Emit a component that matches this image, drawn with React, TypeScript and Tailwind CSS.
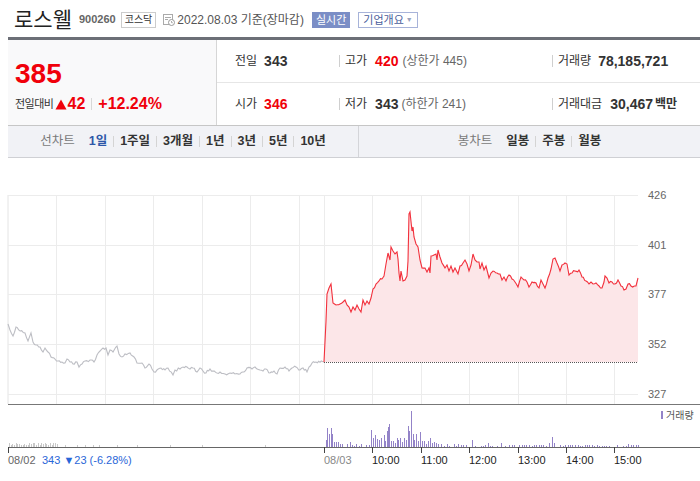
import React from "react";

function rng(seed: number) {
  let a = seed;
  return () => {
    a = (a + 0x6d2b79f5) | 0;
    let t = Math.imul(a ^ (a >>> 15), 1 | a);
    t = (t + Math.imul(t ^ (t >>> 7), 61 | t)) ^ t;
    return ((t ^ (t >>> 14)) >>> 0) / 4294967296;
  };
}

// fill in between key points with a bit of noise so the line looks like tick data
function densify(pts: number[][], jitter: number, seed: number) {
  const r = rng(seed);
  const out: number[][] = [];
  for (let i = 0; i < pts.length - 1; i++) {
    const [x0, y0] = pts[i];
    const [x1, y1] = pts[i + 1];
    out.push([x0, y0]);
    const n = Math.floor((x1 - x0) / 1.3);
    for (let k = 1; k < n; k++) {
      const t = k / n;
      out.push([x0 + (x1 - x0) * t, y0 + (y1 - y0) * t + (r() - 0.5) * jitter]);
    }
  }
  out.push(pts[pts.length - 1]);
  return out;
}

const toPath = (pts: number[][]) => pts.map((p, i) => `${i ? "L" : "M"}${p[0].toFixed(1)},${p[1].toFixed(1)}`).join(" ");

const TODAY_KEYS = [
  [324, 361], [326, 320], [327, 293], [329, 287], [331, 283], [333, 302], [336, 304], [340, 303], [343, 301], [345, 299],
  [347, 304], [349, 306], [351, 311], [353, 306], [355, 309], [357, 304], [359, 308], [361, 311], [363, 299], [365, 304],
  [367, 300], [369, 303], [371, 297], [373, 288], [376, 283], [379, 280], [382, 278], [384, 275], [386, 263], [388, 252],
  [390, 259], [391, 246], [393, 250], [395, 253], [397, 251], [398, 258], [399, 272], [400, 280], [401, 270], [403, 280],
  [405, 279], [407, 275], [408, 260], [409, 213], [410, 211], [412, 230], [413, 226], [414, 236], [416, 243], [418, 246],
  [420, 259], [422, 267], [425, 267], [427, 271], [429, 267], [430, 272], [431, 255], [434, 254], [436, 253], [437, 259],
  [438, 249], [440, 256], [442, 262], [445, 267], [447, 264], [449, 270], [451, 265], [453, 271], [455, 267], [458, 273],
  [460, 265], [463, 262], [465, 259], [467, 263], [469, 270], [471, 264], [473, 253], [475, 259], [477, 261], [479, 261],
  [480, 268], [482, 262], [484, 269], [486, 265], [488, 273], [489, 277], [491, 272], [493, 270], [497, 272], [500, 273],
  [502, 279], [504, 276], [506, 280], [509, 274], [512, 278], [515, 281], [518, 286], [521, 276], [524, 279], [527, 281],
  [529, 286], [532, 281], [536, 282], [539, 287], [541, 279], [543, 283], [545, 287], [548, 277], [551, 268], [553, 258],
  [555, 257], [557, 262], [560, 270], [562, 264], [565, 262], [567, 263], [569, 274], [572, 272], [575, 270], [579, 269],
  [582, 276], [586, 280], [589, 283], [591, 281], [593, 283], [596, 282], [599, 285], [602, 287], [604, 281], [605, 275],
  [607, 277], [609, 282], [612, 281], [615, 283], [618, 279], [621, 285], [624, 289], [626, 288], [628, 283], [631, 285],
  [636, 285], [638, 277],
];

const PREV_KEYS = [
  [8, 323], [10, 329], [13, 335], [16, 326], [20, 330], [25, 332], [28, 340], [31, 332], [33, 341], [36, 344], [40, 346],
  [43, 351], [45, 347], [48, 351], [51, 356], [55, 358], [58, 360], [62, 361], [65, 362], [67, 358], [70, 361], [73, 363],
  [77, 361], [79, 366], [82, 363], [85, 360], [90, 359], [94, 361], [97, 354], [100, 350], [103, 347], [106, 347],
  [108, 354], [110, 349], [113, 351], [117, 345], [119, 353], [122, 356], [125, 353], [130, 352], [134, 356], [137, 362],
  [142, 362], [145, 367], [149, 363], [152, 368], [154, 371], [157, 369], [161, 367], [165, 369], [168, 367], [173, 374],
  [175, 369], [180, 368], [183, 366], [187, 366], [190, 368], [193, 367], [197, 371], [200, 367], [203, 370], [206, 372],
  [210, 368], [213, 370], [217, 372], [220, 371], [225, 373], [230, 372], [235, 373], [240, 373], [244, 371], [247, 367],
  [252, 368], [255, 366], [260, 369], [263, 370], [266, 368], [270, 372], [274, 370], [277, 373], [280, 367], [285, 366],
  [289, 370], [292, 367], [296, 366], [300, 369], [303, 367], [307, 371], [309, 366], [312, 362], [316, 361], [324, 361],
];

const SPIKES: [number, number][] = [
  [326, 7], [327, 19], [329, 13], [331, 19], [332, 13], [334, 5], [336, 5], [338, 5], [340, 3], [342, 3], [350, 5],
  [371, 17], [373, 9], [375, 12], [377, 8], [379, 7], [381, 9], [384, 12], [385, 6], [387, 16], [388, 20], [389, 23],
  [391, 6], [393, 6], [395, 4], [397, 9], [398, 7], [400, 9], [402, 5], [404, 9], [406, 7], [408, 21], [409, 16],
  [411, 36], [413, 13], [414, 7], [416, 13], [418, 6], [420, 15], [422, 6], [424, 6], [426, 3], [428, 6], [430, 9],
  [432, 4], [434, 5], [436, 4], [438, 3], [441, 3], [447, 3], [472, 7], [488, 4], [501, 4], [549, 4], [552, 10],
  [554, 4], [628, 3], [638, 2],
];

function buildVolume() {
  const r = rng(7);
  const bars: [number, number][] = [...SPIKES];
  for (let x = 325; x < 638; x += 1.7) {
    const rx = Math.round(x);
    if (bars.some((b) => Math.abs(b[0] - rx) < 2)) continue;
    const v = r();
    if (v < 0.25) continue;
    const early = rx < 460 ? 2 : 0;
    bars.push([rx, 1 + Math.floor(r() * (2 + early))]);
  }
  return bars;
}

function buildPrevVolume() {
  const r = rng(3);
  const bars: [number, number][] = [];
  for (let x = 9; x < 57; x += 1.7) bars.push([Math.round(x), 2 + Math.floor(r() * 3)]);
  [65, 77, 85, 93, 99, 117, 137, 170, 202, 265].forEach((x) => bars.push([x, 2]));
  return bars;
}

const today = densify(TODAY_KEYS, 3, 11);
const prev = densify(PREV_KEYS, 2.5, 5);
const todayVol = buildVolume();
const prevVol = buildPrevVolume();

const V_GRID = [56, 105, 153, 202, 250, 299, 324, 372, 421, 469, 518, 566, 614];
const H_GRID: [number, string][] = [[194, "426"], [244, "401"], [293, "377"], [343, "352"], [393, "327"]];
const TIMES: [number, string][] = [[372, "10:00"], [421, "11:00"], [469, "12:00"], [518, "13:00"], [566, "14:00"], [614, "15:00"]];

function Chart() {
  const areaPath = `${toPath(today)} L638,361 L324,361 Z`;
  return (
    <svg width="700" height="324" viewBox="0 157 700 324" className="block">
      {/* grid */}
      <line x1="8" y1="194" x2="8" y2="403" stroke="#e4e4e4" />
      {V_GRID.map((x) => (
        <line key={x} x1={x + 0.5} y1="194" x2={x + 0.5} y2="403" stroke="#ececec" />
      ))}
      {H_GRID.map(([y]) => (
        <line key={y} x1="8" y1={y + 0.5} x2="638" y2={y + 0.5} stroke="#ececec" />
      ))}
      {H_GRID.map(([y, t]) => (
        <text key={t} x="648" y={y + 4} fontSize="11" fill="#666" fontFamily="Liberation Sans, sans-serif">
          {t}
        </text>
      ))}

      {/* price */}
      <path d={areaPath} fill="#fce6e8" />
      <line x1="324" y1="361.5" x2="638" y2="361.5" stroke="#555" strokeDasharray="1 1" />
      <path d={toPath(prev)} fill="none" stroke="#bdbec4" strokeWidth="1.1" />
      <path d={toPath(today)} fill="none" stroke="#f2303c" strokeWidth="1.1" />

      <line x1="8" y1="403.5" x2="700" y2="403.5" stroke="#777" />

      {/* volume */}
      {prevVol.map(([x, h], i) => (
        <rect key={"p" + i} x={x} y={446 - h} width="1" height={h} fill="#c9c9c9" />
      ))}
      {todayVol.map(([x, h], i) => (
        <rect key={"t" + i} x={x} y={446 - h} width="1" height={h} fill="#9383c8" />
      ))}
      <rect x="661" y="410" width="2" height="8" fill="#9383c8" />
      <text x="666" y="418" fontSize="10" fill="#555" fontFamily="Noto Sans CJK KR, sans-serif">
        거래량
      </text>

      {/* axis */}
      <line x1="8" y1="446.5" x2="700" y2="446.5" stroke="#666" />
      {[8, 324, ...TIMES.map((t) => t[0])].map((x) => (
        <line key={x} x1={x + 0.5} y1="446" x2={x + 0.5} y2="452" stroke="#444" />
      ))}
      <text y="463" fontSize="11" fontFamily="Liberation Sans, sans-serif">
        <tspan x="8" fill="#666">08/02</tspan>
        <tspan x="42" fill="#2a66d8">343 ▼23 (-6.28%)</tspan>
      </text>
      <text x="324" y="463" fontSize="11" fill="#888" fontFamily="Liberation Sans, sans-serif">
        08/03
      </text>
      {TIMES.map(([x, t]) => (
        <text key={t} x={x} y="463" fontSize="11" fill="#222" fontFamily="Liberation Sans, sans-serif">
          {t}
        </text>
      ))}
    </svg>
  );
}

function CalIcon() {
  return (
    <svg width="13" height="13" viewBox="0 0 13 13" className="ml-[6px]">
      <rect x="1.5" y="1.5" width="9" height="10" fill="none" stroke="#aaa" />
      <line x1="3" y1="4.5" x2="9" y2="4.5" stroke="#aaa" />
      <line x1="3" y1="6.5" x2="6" y2="6.5" stroke="#aaa" />
      <circle cx="9.5" cy="9.5" r="3" fill="#fff" stroke="#999" />
      <path d="M9.5 8v1.7h1.3" fill="none" stroke="#999" strokeWidth="0.8" />
    </svg>
  );
}

function Sep() {
  return <span className="w-px h-[11px] bg-[#d4d4d4] mx-[6px]" />;
}

function Toolbar() {
  const items = ["1주일", "3개월", "1년", "3년", "5년", "10년"];
  return (
    <div className="ml-[8px] h-[32px] flex bg-[#f1f2f6] border-b border-[#cfd0d4] text-[12.5px]">
      <div className="w-[351px] border-r border-[#d4d5d9] flex items-center justify-center">
        <span className="text-[#7a7a7a] mr-[14px]">선차트</span>
        <span className="font-bold text-[#2d57a8]">1일</span>
        {items.map((t) => (
          <React.Fragment key={t}>
            <Sep />
            <span className="font-bold text-[#333]">{t}</span>
          </React.Fragment>
        ))}
      </div>
      <div className="flex-1 flex items-center justify-center">
        <span className="text-[#7a7a7a] mr-[14px]">봉차트</span>
        <span className="font-bold text-[#333]">일봉</span>
        <Sep />
        <span className="font-bold text-[#333]">주봉</span>
        <Sep />
        <span className="font-bold text-[#333]">월봉</span>
      </div>
    </div>
  );
}

function Divider() {
  return <span className="w-px h-[12px] bg-[#cfcfcf] mr-[5px]" />;
}

function Summary() {
  return (
    <div className="ml-[8px] h-[86px] flex border-b border-[#c6c6c6]">
      <div className="w-[209px] shrink-0 bg-[#f9f9fa] border-r border-[#d6d6d6] pl-[7px] pt-[20px]">
        <div className="text-[28px] font-bold text-[#f0000a] leading-[28px]">385</div>
        <div className="mt-[6px] flex items-center h-[20px]">
          <span className="text-[11px] text-[#333] tracking-[-0.5px]">전일대비</span>
          <svg width="12" height="11" viewBox="0 0 12 11" className="ml-[2px]">
            <path d="M6 0.5L11.5 10.5H0.5Z" fill="#f0000a" />
          </svg>
          <span className="text-[16px] font-bold text-[#f0000a] leading-none">42</span>
          <span className="w-px h-[12px] bg-[#d8d8d8] mx-[6px]" />
          <span className="text-[16px] font-bold text-[#f0000a] leading-none">+12.24%</span>
        </div>
      </div>
      <div className="flex-1 flex flex-col text-[12px] text-[#333]">
        <div className="h-[43px] flex items-center border-b border-[#e6e6e6]">
          <div className="w-[122px] pl-[18px] flex items-center">
            <span>전일</span>
            <span className="ml-[7px] text-[14px] font-bold">343</span>
          </div>
          <div className="w-[213px] flex items-center">
            <Divider />
            <span>고가</span>
            <span className="ml-[8px] text-[14px] font-bold text-[#f0000a]">420</span>
            <span className="ml-[4px] text-[#666] text-[12px]">(상한가 445)</span>
          </div>
          <div className="flex-1 flex items-center">
            <Divider />
            <span>거래량</span>
            <span className="ml-[7px] text-[14px] font-bold">78,185,721</span>
          </div>
        </div>
        <div className="flex-1 flex items-center">
          <div className="w-[122px] pl-[18px] flex items-center">
            <span>시가</span>
            <span className="ml-[7px] text-[14px] font-bold text-[#f0000a]">346</span>
          </div>
          <div className="w-[213px] flex items-center">
            <Divider />
            <span>저가</span>
            <span className="ml-[8px] text-[14px] font-bold">343</span>
            <span className="ml-[3px] text-[#666] text-[12px]">(하한가 241)</span>
          </div>
          <div className="flex-1 flex items-center">
            <Divider />
            <span>거래대금</span>
            <span className="ml-[8px] text-[14px] font-bold">30,467</span>
            <span className="ml-[2px] font-bold">백만</span>
          </div>
        </div>
      </div>
    </div>
  );
}

function Header() {
  return (
    <div className="h-[37px] flex items-center pl-[14px] pt-[2px]">
      <span className="text-[21px] leading-none text-[#222]">로스웰</span>
      <span className="ml-[7px] text-[11px] font-bold text-[#666]">900260</span>
      <span className="ml-[5px] h-[16px] px-[3px] border border-[#cccccc] text-[10px] leading-[14px] text-[#333]">코스닥</span>
      <CalIcon />
      <span className="ml-[2px] text-[12px] text-[#555]">2022.08.03 기준(장마감)</span>
      <span className="ml-[8px] h-[16px] px-[4px] bg-[#7b8ec6] text-white text-[11px] leading-[16px]">실시간</span>
      <span className="ml-[8px] h-[16px] px-[4px] border border-[#a7b3d9] text-[#4b5e9c] text-[11px] leading-[14px] flex items-center">
        기업개요
        <span className="ml-[2px] text-[#9aa3bd] text-[7px]">▼</span>
      </span>
    </div>
  );
}

export default function App() {
  return (
    <div className="w-[700px] h-[481px] bg-white overflow-hidden font-['Liberation_Sans','Noto_Sans_CJK_KR',sans-serif] text-[#333]">
      <Header />
      <div className="ml-[8px] h-[3px] bg-[#6c6f77]" />
      <Summary />
      <Toolbar />
      <Chart />
    </div>
  );
}
